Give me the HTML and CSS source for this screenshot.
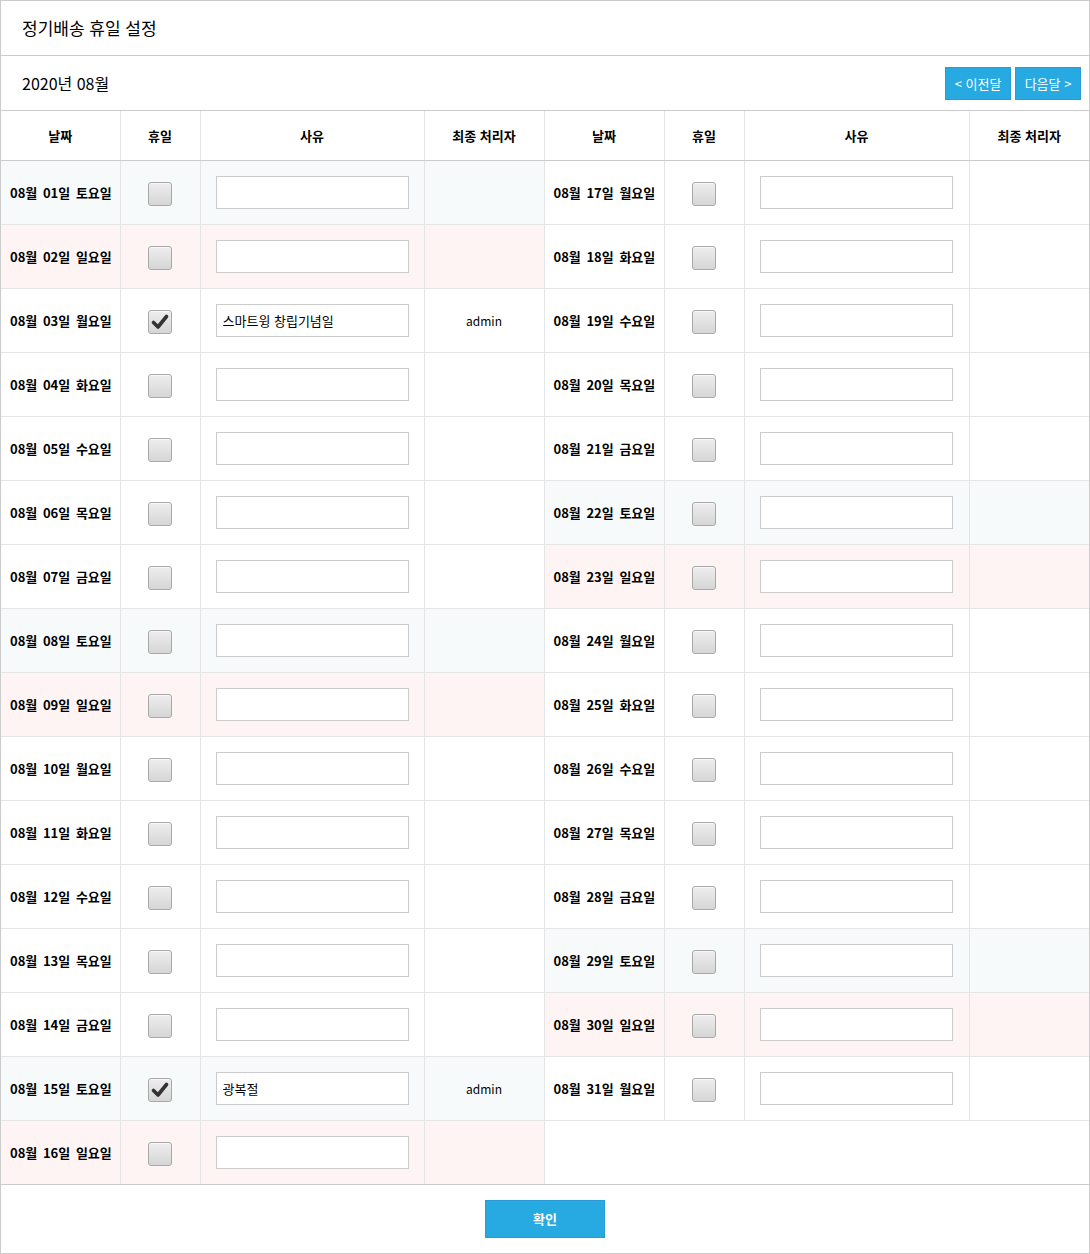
FILE: index.html
```html
<!DOCTYPE html>
<html lang="ko">
<head>
    <meta charset="UTF-8">
    <meta name="viewport" content="width=device-width, initial-scale=1.0">
    <title>정기배송 휴일 설정</title>
    <link rel="stylesheet" href="styles.css">
</head>
<body>

<div class="wrap">
    <div class="title">정기배송 휴일 설정</div>

    <div class="month-bar">
        <span class="month">2020년 08월</span>
        <div class="month-nav">
            <button type="button" class="nav-btn">&lt; 이전달</button>
            <button type="button" class="nav-btn">다음달 &gt;</button>
        </div>
    </div>

    <form id="holidayForm">
        <table class="holiday-table">
            <colgroup>
                <col style="width:119px"><col style="width:80px"><col style="width:224px"><col style="width:120px">
                <col style="width:120px"><col style="width:80px"><col style="width:225px"><col>
            </colgroup>
            <thead>
                <tr>
                    <th>날짜</th><th>휴일</th><th>사유</th><th>최종 처리자</th>
                    <th>날짜</th><th>휴일</th><th>사유</th><th>최종 처리자</th>
                </tr>
            </thead>
            <tbody id="holidayRows"></tbody>
        </table>

        <div class="footer">
            <button type="button" class="ok-btn">확인</button>
        </div>
    </form>
</div>

<script>
    const dayNames = ["일요일", "월요일", "화요일", "수요일", "목요일", "금요일", "토요일"];
    // 저장된 휴일
    const saved = {
        3: { reason: "스마트윙 창립기념일", user: "admin" },
        15: { reason: "광복절", user: "admin" }
    };

    function pad(n) {
        return n.toString().padStart(2, "0");
    }

    function dayCells(day) {
        const dow = new Date(2020, 7, day).getDay();
        let cls = "";
        if (dow === 6) cls = "sat";
        if (dow === 0) cls = "sun";
        const info = saved[day] || { reason: "", user: "" };
        const checked = saved[day] ? "checked" : "";

        return `
            <td class="date ${cls}">08월 ${pad(day)}일 ${dayNames[dow]}</td>
            <td class="${cls}">
                <label class="chk">
                    <input type="checkbox" name="holiday_${day}" ${checked}>
                    <span class="box"><svg width="24" height="24" viewBox="0 0 24 24"><path d="M5.5 12.5 L10 17 L18.5 6.5" fill="none" stroke="#333" stroke-width="3.6" stroke-linecap="round" stroke-linejoin="round"/></svg></span>
                </label>
            </td>
            <td class="reason ${cls}"><input type="text" name="reason_${day}" value="${info.reason}"></td>
            <td class="user ${cls}">${info.user}</td>`;
    }

    const rows = document.getElementById("holidayRows");
    let html = "";
    for (let i = 1; i <= 16; i++) {
        html += "<tr>" + dayCells(i);
        if (i + 16 <= 31) {
            html += dayCells(i + 16);
        } else {
            html += '<td colspan="4" class="empty"></td>';
        }
        html += "</tr>";
    }
    rows.innerHTML = html;
</script>

</body>
</html>
```

FILE: styles.css
```css
* {
    box-sizing: border-box;
}
body {
    margin: 0;
    font-family: "Noto Sans CJK KR", "Noto Sans", sans-serif;
    color: #000;
    background: #fff;
}
.wrap {
    width: 1090px;
    height: 1254px;
    border: 1px solid #ccc;
}
.title {
    height: 55px;
    line-height: 53px;
    padding-left: 21px;
    font-size: 17px;
    border-bottom: 1px solid #ccc;
}
.month-bar {
    height: 55px;
    display: flex;
    align-items: center;
    justify-content: space-between;
    padding: 0 8px 0 21px;
    border-bottom: 1px solid #ccc;
}
.month {
    font-size: 16px;
}
.month-nav {
    display: flex;
    gap: 4px;
}
.nav-btn {
    width: 66px;
    height: 33px;
    padding: 0;
    background-color: #27a9e1;
    border: 1px solid #2a9bd4;
    color: #fff;
    font-family: inherit;
    font-size: 13px;
    cursor: pointer;
}
.holiday-table {
    width: 1088px;
    border-collapse: collapse;
    table-layout: fixed;
}
.holiday-table th {
    height: 49px;
    font-size: 13px;
    font-weight: bold;
    border-left: 1px solid #e5e5e5;
    border-bottom: 1px solid #ccc;
    padding: 0;
}
.holiday-table td {
    height: 64px;
    padding: 0;
    text-align: center;
    border-left: 1px solid #e5e5e5;
    border-bottom: 1px solid #e5e5e5;
}
.holiday-table tr > :first-child {
    border-left: none;
}
.holiday-table tbody tr:last-child td {
    border-bottom: 1px solid #ccc;
}
.holiday-table td.date {
    text-align: left;
    padding-left: 9px;
    font-size: 13px;
    font-weight: bold;
    word-spacing: 2px;
}
.holiday-table td.sat {
    background-color: #f6fafb;
}
.holiday-table td.sun {
    background-color: #fff4f4;
}
.holiday-table td.reason {
    text-align: left;
    padding-left: 15px;
}
.reason input {
    width: 193px;
    height: 33px;
    border: 1px solid #ccc;
    padding: 0 6px;
    font-family: inherit;
    font-size: 13px;
    background: #fff;
    vertical-align: middle;
}
.holiday-table td.user {
    font-size: 12px;
}
.chk {
    display: inline-block;
    vertical-align: middle;
    margin-top: 1px;
}
.chk input {
    display: none;
}
.chk .box {
    display: block;
    width: 24px;
    height: 24px;
    border: 1px solid #a9a9a9;
    border-radius: 3px;
    background: linear-gradient(#ededed, #d6d6d6);
    box-shadow: inset 0 1px 0 #f8f8f8;
}
.chk .box svg {
    display: none;
    margin: -1px 0 0 -1px;
}
.chk input:checked + .box svg {
    display: block;
}
.footer {
    height: 68px;
    display: flex;
    justify-content: center;
    padding-top: 15px;
}
.ok-btn {
    width: 120px;
    height: 38px;
    background-color: #27a9e1;
    border: 1px solid #2a9bd4;
    color: #fff;
    font-family: inherit;
    font-size: 13px;
    font-weight: bold;
    cursor: pointer;
}
```
